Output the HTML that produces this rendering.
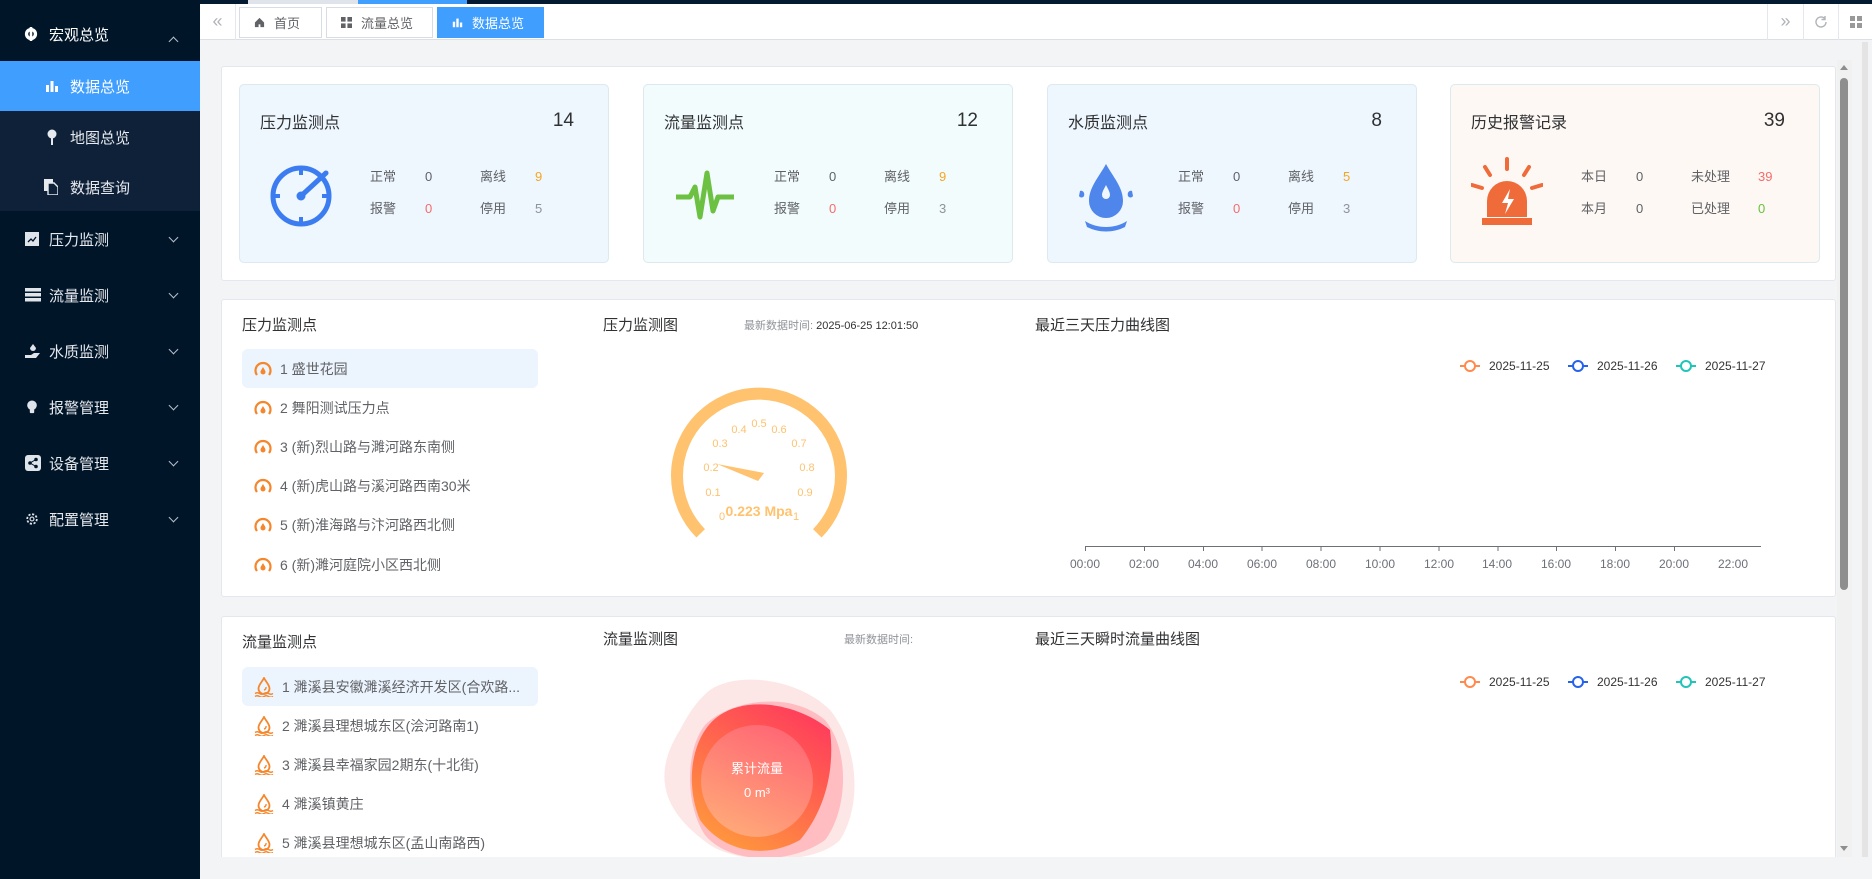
<!DOCTYPE html>
<html><head><meta charset="utf-8">
<style>
*{margin:0;padding:0;box-sizing:border-box}
body{width:1872px;height:879px;overflow:hidden;background:#f3f4f6;font-family:"Liberation Sans","Noto Sans CJK SC",sans-serif;position:relative;color:#303133}
.a{position:absolute}
#side{left:0;top:0;width:200px;height:879px;background:#011529}
.mi{position:absolute;left:0;width:200px;color:#e6e9ee;font-size:15px;display:flex;align-items:center}
.mi .t{position:absolute;left:49px}
.mi .ic{position:absolute;left:25px;width:14px;height:14px}
.chev{position:absolute;left:170px;width:7px;height:7px;border-right:1.2px solid #b8c0cc;border-bottom:1.2px solid #b8c0cc;transform:rotate(45deg)}
.tab{position:absolute;top:7px;height:31px;border:1px solid #d8dce5;background:#fff;font-size:13px;color:#606266;display:flex;align-items:center;padding-left:14px}
.panel{position:absolute;left:221px;width:1615px;background:#fff;border:1px solid #e4e7ed;border-radius:3px}
.card{position:absolute;top:17px;width:370px;height:179px;border:1px solid #dce9ef;border-radius:5px}
.card .hd{position:absolute;left:20px;right:34px;top:22px;height:28px;display:flex;align-items:center;justify-content:space-between}
.card .tt{font-size:16px;color:#303133}
.card .num{font-size:19px;color:#303133}
.row{position:absolute;left:130px;height:20px;display:flex;align-items:baseline;font-size:13px;color:#606266;white-space:nowrap}
.row span{display:inline-block}
.pt{position:absolute;font-size:15px;color:#303133}
.li{position:absolute;left:20px;width:296px;height:39px;font-size:14px;color:#606266;display:flex;align-items:center;border-radius:6px}
.li svg{margin-left:12px;margin-right:8px}
.tick{position:absolute;top:557px;font-size:12px;color:#6e7079;transform:translateX(-50%)}
.lg{position:absolute;font-size:12px;color:#333}
</style></head><body>

<div id="side" class="a">
  <div class="mi" style="top:8px;height:52px;font-size:15px;color:#fff">
    <svg class="ic" style="left:24px" viewBox="0 0 16 16"><circle cx="8" cy="8" r="7" fill="#fff"/><circle cx="8" cy="8" r="3.2" fill="#011529"/><rect x="6.5" y="0" width="3" height="16" fill="#fff"/></svg>
    <span class="t" style="left:49px">宏观总览</span>
    <div class="chev" style="transform:rotate(225deg);top:30px"></div>
  </div>
  <div class="a" style="top:61px;left:0;width:200px;height:150px;background:#0f2138"></div>
  <div class="mi" style="top:61px;height:50px;background:#409eff;color:#fff">
    <svg class="ic" style="left:45px" viewBox="0 0 14 14"><rect x="1" y="6" width="3" height="7" fill="#fff"/><rect x="5.5" y="2" width="3" height="11" fill="#fff"/><rect x="10" y="7" width="3" height="6" fill="#fff"/></svg>
    <span class="t" style="left:70px">数据总览</span></div>
  <div class="mi" style="top:112px;height:50px">
    <svg class="ic" style="left:45px;height:16px" viewBox="0 0 14 16"><circle cx="7" cy="5" r="4.5" fill="#e6e9ee"/><rect x="6" y="8" width="2" height="8" fill="#e6e9ee"/></svg>
    <span class="t" style="left:70px">地图总览</span></div>
  <div class="mi" style="top:162px;height:50px">
    <svg class="ic" style="left:44px;height:16px" viewBox="0 0 14 16"><rect x="0" y="0" width="9" height="12" fill="#e6e9ee"/><path d="M4 4h6l4 4v8H4z" fill="#0f2138" stroke="#e6e9ee" stroke-width="1.4"/></svg>
    <span class="t" style="left:70px">数据查询</span></div>
  <div class="mi" style="top:215px;height:48px"><svg class="ic" viewBox="0 0 14 14"><rect width="14" height="14" fill="#dfe3ea"/><path d="M3 10l3-3 2 2 3-4" stroke="#011529" fill="none" stroke-width="1.3"/></svg><span class="t">压力监测</span><div class="chev" style="top:19px"></div></div>
  <div class="mi" style="top:271px;height:48px"><svg class="ic" style="width:16px" viewBox="0 0 16 14"><rect y="0" width="16" height="3.5" fill="#dfe3ea"/><rect y="5" width="16" height="3.5" fill="#dfe3ea"/><rect y="10" width="16" height="3.5" fill="#dfe3ea"/></svg><span class="t">流量监测</span><div class="chev" style="top:19px"></div></div>
  <div class="mi" style="top:327px;height:48px"><svg class="ic" style="width:16px" viewBox="0 0 16 14"><path d="M8 0l3 4a3 3 0 1 1-6 0z" fill="#dfe3ea"/><path d="M0 11h6l3-2h6l-4 5H0z" fill="#dfe3ea"/></svg><span class="t">水质监测</span><div class="chev" style="top:19px"></div></div>
  <div class="mi" style="top:383px;height:48px"><svg class="ic" viewBox="0 0 14 16"><circle cx="7" cy="6" r="5.5" fill="#dfe3ea"/><rect x="4.5" y="10" width="5" height="5" rx="1" fill="#dfe3ea"/></svg><span class="t">报警管理</span><div class="chev" style="top:19px"></div></div>
  <div class="mi" style="top:439px;height:48px"><svg class="ic" style="width:16px;height:16px" viewBox="0 0 16 16"><rect width="16" height="16" rx="3" fill="#dfe3ea"/><circle cx="11" cy="4.5" r="1.8" fill="#011529"/><circle cx="11" cy="11.5" r="1.8" fill="#011529"/><circle cx="5" cy="8" r="1.8" fill="#011529"/><path d="M11 4.5L5 8l6 3.5" stroke="#011529" fill="none"/></svg><span class="t">设备管理</span><div class="chev" style="top:19px"></div></div>
  <div class="mi" style="top:495px;height:48px"><svg class="ic" viewBox="0 0 16 16"><circle cx="8" cy="8" r="5.5" fill="none" stroke="#dfe3ea" stroke-width="2" stroke-dasharray="2.5 1.8"/><circle cx="8" cy="8" r="2.2" fill="none" stroke="#dfe3ea" stroke-width="1.3"/></svg><span class="t">配置管理</span><div class="chev" style="top:19px"></div></div>
</div>

<div class="a" style="left:200px;top:0;width:1672px;height:40px;background:#fff;border-bottom:1px solid #dcdfe6"></div>
<div class="a" style="left:200px;top:0;width:1672px;height:4px;background:#041a30"></div>
<div class="a" style="left:248px;top:0;width:110px;height:4px;background:#dfe3ea"></div>
<div class="a" style="left:358px;top:0;width:109px;height:4px;background:#409eff"></div>
<div class="a" style="left:200px;top:4px;width:36px;height:36px;border-right:1px solid #e4e7ed;color:#b0b3b8;font-size:18px;text-align:center;line-height:34px">«</div>
<div class="tab" style="left:239px;width:83px"><svg width="11" height="11" viewBox="0 0 12 12" style="margin-right:9px"><path d="M6 1L1 6v5h4V8h2v3h4V6z" fill="#606266"/></svg>首页</div>
<div class="tab" style="left:326px;width:107px"><svg width="11" height="11" viewBox="0 0 12 12" style="margin-right:9px"><rect width="5" height="5" fill="#606266"/><rect x="7" width="5" height="5" fill="#606266"/><rect y="7" width="5" height="5" fill="#606266"/><rect x="7" y="7" width="5" height="5" fill="#606266"/></svg>流量总览</div>
<div class="tab" style="left:437px;width:107px;background:#409eff;border-color:#409eff;color:#fff"><svg width="11" height="11" viewBox="0 0 14 14" style="margin-right:9px"><rect x="1" y="6" width="3" height="7" fill="#fff"/><rect x="5.5" y="2" width="3" height="11" fill="#fff"/><rect x="10" y="7" width="3" height="6" fill="#fff"/></svg>数据总览</div>
<div class="a" style="left:1767px;top:4px;width:36px;height:36px;border-left:1px solid #e4e7ed;color:#b0b3b8;font-size:18px;text-align:center;line-height:34px">»</div>
<div class="a" style="left:1803px;top:4px;width:35px;height:36px;border-left:1px solid #e4e7ed"><svg width="14" height="14" style="margin:11px 10px" viewBox="0 0 14 14"><path d="M12 7a5 5 0 1 1-1.5-3.6" fill="none" stroke="#b0b3b8" stroke-width="1.4"/><path d="M11 1v3.5H7.5" fill="none" stroke="#b0b3b8" stroke-width="1.4"/></svg></div>
<div class="a" style="left:1838px;top:4px;width:34px;height:36px;border-left:1px solid #e4e7ed"><svg width="12" height="12" style="margin:12px 11px" viewBox="0 0 12 12"><rect width="5" height="5" fill="#999"/><rect x="7" width="5" height="5" fill="#999"/><rect y="7" width="5" height="5" fill="#999"/><rect x="7" y="7" width="5" height="5" fill="#999"/></svg></div>

<div class="panel" style="top:66px;height:215px">
  <div class="card" style="left:17px;background:#eef6fe">
    <div class="hd"><span class="tt">压力监测点</span><span class="num">14</span></div>
    <svg class="a" style="left:28px;top:77px" width="66" height="66" viewBox="0 0 66 66"><circle cx="33" cy="34" r="28" fill="none" stroke="#3b7cf0" stroke-width="5"/><path d="M33 6v7M33 55v7M5 34h7M54 34h7" stroke="#3b7cf0" stroke-width="4"/><path d="M33 34L58 11" stroke="#3b7cf0" stroke-width="5" stroke-linecap="round"/><circle cx="33" cy="34" r="4.5" fill="#3b7cf0"/></svg>
    <div class="row" style="top:81px"><span style="width:55px">正常</span><span style="width:55px">0</span><span style="width:55px">离线</span><span style="color:#f5a623">9</span></div>
    <div class="row" style="top:113px"><span style="width:55px">报警</span><span style="width:55px;color:#f56c6c">0</span><span style="width:55px">停用</span><span style="color:#909399">5</span></div>
  </div>
  <div class="card" style="left:421px;background:#f2fcfc">
    <div class="hd"><span class="tt">流量监测点</span><span class="num">12</span></div>
    <svg class="a" style="left:30px;top:82px" width="62" height="60" viewBox="0 0 62 60"><path d="M2 30h14l5-10 5 30 7-44 6 38 5-14h16" fill="none" stroke="#6cc142" stroke-width="5" stroke-linejoin="round"/></svg>
    <div class="row" style="top:81px"><span style="width:55px">正常</span><span style="width:55px">0</span><span style="width:55px">离线</span><span style="color:#f5a623">9</span></div>
    <div class="row" style="top:113px"><span style="width:55px">报警</span><span style="width:55px;color:#f56c6c">0</span><span style="width:55px">停用</span><span style="color:#909399">3</span></div>
  </div>
  <div class="card" style="left:825px;background:#eef6fe">
    <div class="hd"><span class="tt">水质监测点</span><span class="num">8</span></div>
    <svg class="a" style="left:25px;top:76px" width="66" height="72" viewBox="0 0 66 72"><path d="M33 3C26 16 16 26 16 40a17 17 0 0 0 34 0C50 26 40 16 33 3z" fill="#4f86ec"/><path d="M33 24c-2 4-4 7-4 10a4 4 0 0 0 8 0c0-3-2-6-4-10z" fill="#eef6fe"/><path d="M7 30c3-1 5 2 4 5-1 2-4 2-5 0zM59 30c-3-1-5 2-4 5 1 2 4 2 5 0z" fill="#4f86ec"/><path d="M12 60c12 8 30 8 42 0l-2 6c-12 6-26 6-38 0z" fill="#4f86ec"/></svg>
    <div class="row" style="top:81px"><span style="width:55px">正常</span><span style="width:55px">0</span><span style="width:55px">离线</span><span style="color:#f5a623">5</span></div>
    <div class="row" style="top:113px"><span style="width:55px">报警</span><span style="width:55px;color:#f56c6c">0</span><span style="width:55px">停用</span><span style="color:#909399">3</span></div>
  </div>
  <div class="card" style="left:1228px;background:#fdf8f4">
    <div class="hd"><span class="tt">历史报警记录</span><span class="num">39</span></div>
    <svg class="a" style="left:20px;top:70px" width="72" height="72" viewBox="0 0 72 72"><path d="M36 4v10M14 12l5 8M58 12l-5 8M1 30l10 3M71 30l-10 3" stroke="#ef6b3a" stroke-width="4" stroke-linecap="round"/><path d="M16 62V46a20 20 0 0 1 40 0v16z" fill="#ef6b3a"/><rect x="11" y="63" width="50" height="7" fill="#ef6b3a"/><path d="M39 34l-8 14h6l-3 11 9-15h-6z" fill="#fff"/></svg>
    <div class="row" style="top:81px"><span style="width:55px">本日</span><span style="width:55px">0</span><span style="width:67px">未处理</span><span style="color:#f56c6c">39</span></div>
    <div class="row" style="top:113px"><span style="width:55px">本月</span><span style="width:55px">0</span><span style="width:67px">已处理</span><span style="color:#67c23a">0</span></div>
  </div>
</div>

<div class="panel" style="top:299px;height:298px">
  <div class="pt" style="left:20px;top:14px">压力监测点</div>
  <div class="li" style="top:49px;background:#ecf4fe"><svg width="18" height="17" viewBox="0 0 18 17"><path d="M3 15A7.5 7.5 0 1 1 15 15" fill="none" stroke="#f5862b" stroke-width="2.2"/><path d="M9 7c-1 2-2.5 3.5-2.5 5a2.5 2.5 0 0 0 5 0C11.5 10.5 10 9 9 7z" fill="#f5862b"/></svg>1&nbsp;盛世花园</div>
  <div class="li" style="top:88px"><svg width="18" height="17" viewBox="0 0 18 17"><path d="M3 15A7.5 7.5 0 1 1 15 15" fill="none" stroke="#f5862b" stroke-width="2.2"/><path d="M9 7c-1 2-2.5 3.5-2.5 5a2.5 2.5 0 0 0 5 0C11.5 10.5 10 9 9 7z" fill="#f5862b"/></svg>2&nbsp;舞阳测试压力点</div>
  <div class="li" style="top:127px"><svg width="18" height="17" viewBox="0 0 18 17"><path d="M3 15A7.5 7.5 0 1 1 15 15" fill="none" stroke="#f5862b" stroke-width="2.2"/><path d="M9 7c-1 2-2.5 3.5-2.5 5a2.5 2.5 0 0 0 5 0C11.5 10.5 10 9 9 7z" fill="#f5862b"/></svg>3&nbsp;(新)烈山路与濉河路东南侧</div>
  <div class="li" style="top:166px"><svg width="18" height="17" viewBox="0 0 18 17"><path d="M3 15A7.5 7.5 0 1 1 15 15" fill="none" stroke="#f5862b" stroke-width="2.2"/><path d="M9 7c-1 2-2.5 3.5-2.5 5a2.5 2.5 0 0 0 5 0C11.5 10.5 10 9 9 7z" fill="#f5862b"/></svg>4&nbsp;(新)虎山路与溪河路西南30米</div>
  <div class="li" style="top:205px"><svg width="18" height="17" viewBox="0 0 18 17"><path d="M3 15A7.5 7.5 0 1 1 15 15" fill="none" stroke="#f5862b" stroke-width="2.2"/><path d="M9 7c-1 2-2.5 3.5-2.5 5a2.5 2.5 0 0 0 5 0C11.5 10.5 10 9 9 7z" fill="#f5862b"/></svg>5&nbsp;(新)淮海路与汴河路西北侧</div>
  <div class="li" style="top:245px"><svg width="18" height="17" viewBox="0 0 18 17"><path d="M3 15A7.5 7.5 0 1 1 15 15" fill="none" stroke="#f5862b" stroke-width="2.2"/><path d="M9 7c-1 2-2.5 3.5-2.5 5a2.5 2.5 0 0 0 5 0C11.5 10.5 10 9 9 7z" fill="#f5862b"/></svg>6&nbsp;(新)濉河庭院小区西北侧</div>
  <div class="pt" style="left:381px;top:14px">压力监测图</div>
  <div class="a" style="left:522px;top:17px;font-size:11px;color:#909399">最新数据时间:&nbsp;<span style="color:#303133">2025-06-25 12:01:50</span></div>
  <div class="pt" style="left:813px;top:14px">最近三天压力曲线图</div>
</div>

<svg class="a" style="left:659px;top:375px" width="200" height="180" viewBox="0 0 200 180">
  <path d="M41.7 158.3A82 82 0 1 1 158.3 158.3" fill="none" stroke="#ffc26e" stroke-width="12"/>
  <g font-size="11" fill="#ffc26e" font-family="Liberation Sans,sans-serif" text-anchor="middle">
    <text x="63" y="145">0</text><text x="137" y="145">1</text>
    <text x="54" y="121">0.1</text><text x="52" y="96">0.2</text><text x="61" y="72">0.3</text>
    <text x="80" y="58">0.4</text><text x="100" y="52">0.5</text><text x="120" y="58">0.6</text>
    <text x="140" y="72">0.7</text><text x="148" y="96">0.8</text><text x="146" y="121">0.9</text>
    <text x="100" y="141" font-size="14" font-weight="bold">0.223 Mpa</text>
  </g>
  <path d="M58 89L105 98L99 106z" fill="#ffc26e"/>
</svg>

<svg class="a" style="left:1450px;top:357px" width="340" height="20">
  <g stroke-width="2" fill="#fff">
    <line x1="10" y1="9" x2="30" y2="9" stroke="#ff8a4c"/><circle cx="20" cy="9" r="5" stroke="#ff8a4c"/>
    <line x1="118" y1="9" x2="138" y2="9" stroke="#2563eb"/><circle cx="128" cy="9" r="5" stroke="#2563eb"/>
    <line x1="226" y1="9" x2="246" y2="9" stroke="#1fc5b8"/><circle cx="236" cy="9" r="5" stroke="#1fc5b8"/>
  </g>
</svg>
<div class="lg" style="left:1489px;top:359px">2025-11-25</div>
<div class="lg" style="left:1597px;top:359px">2025-11-26</div>
<div class="lg" style="left:1705px;top:359px">2025-11-27</div>
<div class="a" style="left:1085px;top:546px;width:676px;height:1px;background:#6e7079"></div>
<div class="a" style="left:1085px;top:546px;width:648px;height:5px;background:repeating-linear-gradient(90deg,#6e7079 0 1px,transparent 1px 58.9px)"></div>
<div class="tick" style="left:1085px">00:00</div><div class="tick" style="left:1144px">02:00</div><div class="tick" style="left:1203px">04:00</div><div class="tick" style="left:1262px">06:00</div><div class="tick" style="left:1321px">08:00</div><div class="tick" style="left:1380px">10:00</div><div class="tick" style="left:1439px">12:00</div><div class="tick" style="left:1497px">14:00</div><div class="tick" style="left:1556px">16:00</div><div class="tick" style="left:1615px">18:00</div><div class="tick" style="left:1674px">20:00</div><div class="tick" style="left:1733px">22:00</div>

<div class="panel" style="top:616px;height:260px">
  <div class="pt" style="left:20px;top:14px">流量监测点</div>
  <div class="li" style="top:50px;background:#ecf4fe"><svg width="20" height="20" viewBox="0 0 20 20"><path d="M10 1C8 5 4.5 8 4.5 11.5a5.5 5.5 0 0 0 11 0C15.5 8 12 5 10 1z" fill="none" stroke="#f5862b" stroke-width="1.8"/><path d="M12 10a2.5 2.5 0 0 1-2 3" stroke="#f5862b" fill="none" stroke-width="1.4"/><path d="M1 16.5q2.2-1.5 4.5 0t4.5 0 4.5 0 4.5 0M1 19.5q2.2-1.5 4.5 0t4.5 0 4.5 0 4.5 0" fill="none" stroke="#f5862b" stroke-width="1.4"/></svg>1&nbsp;濉溪县安徽濉溪经济开发区(合欢路...</div>
  <div class="li" style="top:89px"><svg width="20" height="20" viewBox="0 0 20 20"><path d="M10 1C8 5 4.5 8 4.5 11.5a5.5 5.5 0 0 0 11 0C15.5 8 12 5 10 1z" fill="none" stroke="#f5862b" stroke-width="1.8"/><path d="M12 10a2.5 2.5 0 0 1-2 3" stroke="#f5862b" fill="none" stroke-width="1.4"/><path d="M1 16.5q2.2-1.5 4.5 0t4.5 0 4.5 0 4.5 0M1 19.5q2.2-1.5 4.5 0t4.5 0 4.5 0 4.5 0" fill="none" stroke="#f5862b" stroke-width="1.4"/></svg>2&nbsp;濉溪县理想城东区(浍河路南1)</div>
  <div class="li" style="top:128px"><svg width="20" height="20" viewBox="0 0 20 20"><path d="M10 1C8 5 4.5 8 4.5 11.5a5.5 5.5 0 0 0 11 0C15.5 8 12 5 10 1z" fill="none" stroke="#f5862b" stroke-width="1.8"/><path d="M12 10a2.5 2.5 0 0 1-2 3" stroke="#f5862b" fill="none" stroke-width="1.4"/><path d="M1 16.5q2.2-1.5 4.5 0t4.5 0 4.5 0 4.5 0M1 19.5q2.2-1.5 4.5 0t4.5 0 4.5 0 4.5 0" fill="none" stroke="#f5862b" stroke-width="1.4"/></svg>3&nbsp;濉溪县幸福家园2期东(十北街)</div>
  <div class="li" style="top:167px"><svg width="20" height="20" viewBox="0 0 20 20"><path d="M10 1C8 5 4.5 8 4.5 11.5a5.5 5.5 0 0 0 11 0C15.5 8 12 5 10 1z" fill="none" stroke="#f5862b" stroke-width="1.8"/><path d="M12 10a2.5 2.5 0 0 1-2 3" stroke="#f5862b" fill="none" stroke-width="1.4"/><path d="M1 16.5q2.2-1.5 4.5 0t4.5 0 4.5 0 4.5 0M1 19.5q2.2-1.5 4.5 0t4.5 0 4.5 0 4.5 0" fill="none" stroke="#f5862b" stroke-width="1.4"/></svg>4&nbsp;濉溪镇黄庄</div>
  <div class="li" style="top:206px"><svg width="20" height="20" viewBox="0 0 20 20"><path d="M10 1C8 5 4.5 8 4.5 11.5a5.5 5.5 0 0 0 11 0C15.5 8 12 5 10 1z" fill="none" stroke="#f5862b" stroke-width="1.8"/><path d="M12 10a2.5 2.5 0 0 1-2 3" stroke="#f5862b" fill="none" stroke-width="1.4"/><path d="M1 16.5q2.2-1.5 4.5 0t4.5 0 4.5 0 4.5 0M1 19.5q2.2-1.5 4.5 0t4.5 0 4.5 0 4.5 0" fill="none" stroke="#f5862b" stroke-width="1.4"/></svg>5&nbsp;濉溪县理想城东区(孟山南路西)</div>
  <div class="pt" style="left:381px;top:11px">流量监测图</div>
  <div class="a" style="left:622px;top:14px;font-size:11px;color:#909399">最新数据时间:</div>
  <div class="pt" style="left:813px;top:11px">最近三天瞬时流量曲线图</div>
</div>

<svg class="a" style="left:650px;top:670px" width="220" height="188" viewBox="0 0 220 188">
  <defs>
    <linearGradient id="g1" x1="0.2" y1="1" x2="0.8" y2="0"><stop offset="0" stop-color="#ff9a3c"/><stop offset="1" stop-color="#ff3b5c"/></linearGradient>
    <linearGradient id="g2" x1="0.3" y1="1" x2="0.7" y2="0"><stop offset="0" stop-color="#ffae82"/><stop offset="1" stop-color="#ff6b7a"/></linearGradient>
  </defs>
  <path d="M60 20C90 0 150 10 180 40 205 70 215 130 190 170 165 195 90 195 60 175 25 150 -5 115 30 60 40 40 50 28 60 20z" fill="#fde6e6"/>
  <path d="M55 55C80 30 140 20 175 50 200 80 198 140 175 170 140 195 80 195 55 165 35 135 35 80 55 55z" fill="#ffb7bd" opacity="0.9"/>
  <path d="M70 45C100 25 150 35 180 60 185 100 175 140 150 170 110 192 70 178 50 150 35 115 40 65 70 45z" fill="url(#g1)"/>
  <circle cx="107" cy="111" r="56" fill="url(#g2)" opacity="0.85"/>
  <text x="107" y="103" text-anchor="middle" font-size="13" fill="#fff" font-family="Liberation Sans,Noto Sans CJK SC,sans-serif">累计流量</text>
  <text x="107" y="127" text-anchor="middle" font-size="13" fill="#fff" font-family="Liberation Sans,sans-serif">0 m³</text>
</svg>

<svg class="a" style="left:1450px;top:673px" width="340" height="20">
  <g stroke-width="2" fill="#fff">
    <line x1="10" y1="9" x2="30" y2="9" stroke="#ff8a4c"/><circle cx="20" cy="9" r="5" stroke="#ff8a4c"/>
    <line x1="118" y1="9" x2="138" y2="9" stroke="#2563eb"/><circle cx="128" cy="9" r="5" stroke="#2563eb"/>
    <line x1="226" y1="9" x2="246" y2="9" stroke="#1fc5b8"/><circle cx="236" cy="9" r="5" stroke="#1fc5b8"/>
  </g>
</svg>
<div class="lg" style="left:1489px;top:675px">2025-11-25</div>
<div class="lg" style="left:1597px;top:675px">2025-11-26</div>
<div class="lg" style="left:1705px;top:675px">2025-11-27</div>

<div class="a" style="left:200px;top:857px;width:1672px;height:22px;background:#f3f4f6"></div>
<div class="a" style="left:1837px;top:60px;width:15px;height:797px;background:#f1f1f1"></div>
<div class="a" style="left:1840px;top:78px;width:8px;height:512px;background:#8e8e8e;border-radius:4px"></div>
<div class="a" style="left:1840px;top:65px;width:0;height:0;border-left:4px solid transparent;border-right:4px solid transparent;border-bottom:5px solid #8e8e8e"></div>
<div class="a" style="left:1840px;top:846px;width:0;height:0;border-left:4px solid transparent;border-right:4px solid transparent;border-top:5px solid #8e8e8e"></div>
<div class="a" style="left:1862px;top:42px;width:6px;height:815px;background:#e4e4e4"></div>
</body></html>
